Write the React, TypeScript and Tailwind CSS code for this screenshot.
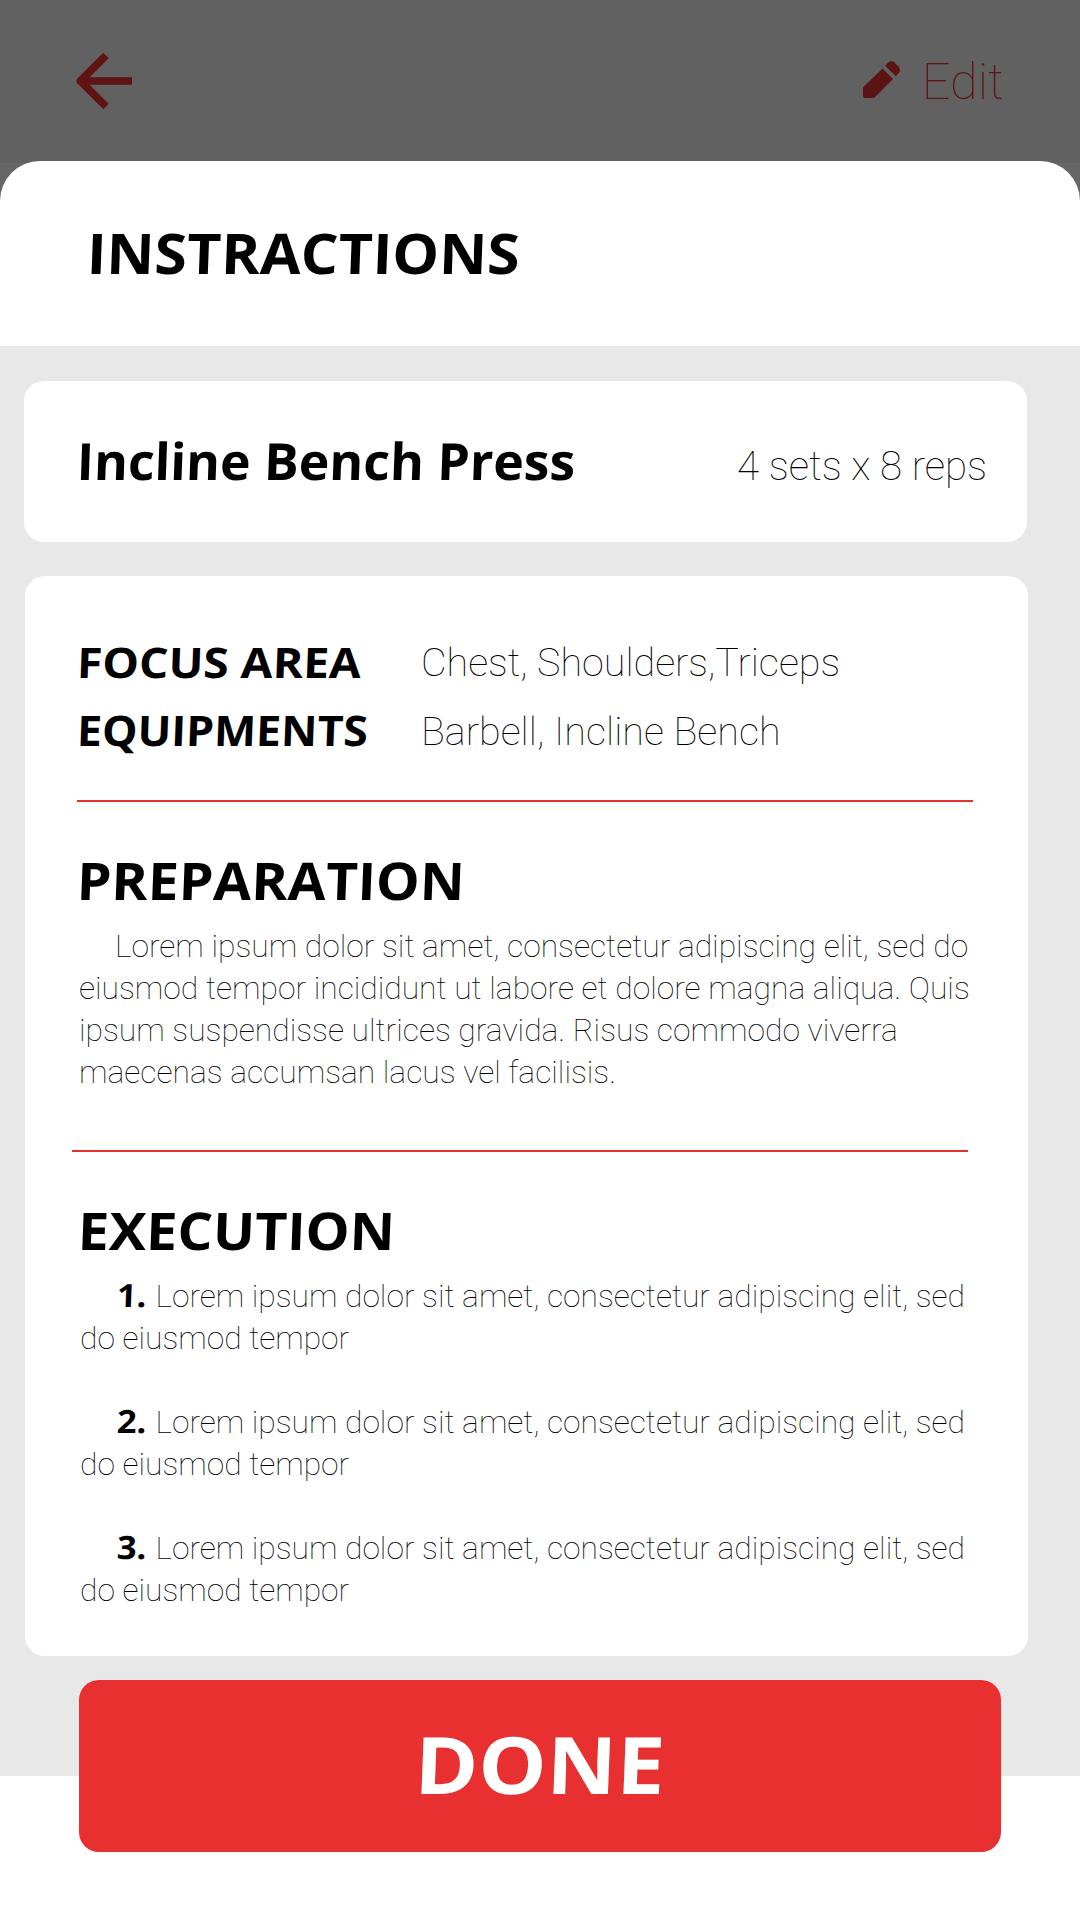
import type { ReactNode } from "react";

const steps = [1, 2, 3];

function Display({ className, children }: { className: string; children: ReactNode }) {
  return (
    <span className={`inline-block whitespace-nowrap font-['Open_Sans',sans-serif] font-bold ${className}`}>
      {children}
    </span>
  );
}

function BackArrow() {
  return (
    <svg width="56" height="58" viewBox="0 0 56 58" fill="none" stroke="#601313" strokeWidth="7.7">
      <path d="M6 29H56" />
      <path d="M30 3.5L4.4 29L30 54.5" strokeLinejoin="round" />
    </svg>
  );
}

function Pencil() {
  return (
    <svg width="37" height="37" viewBox="0 0 37 37" fill="#5c1313">
      <path d="M19.6 7.4L30 18L11.8 36.2Q11 37 10 37H2Q0 37 0 35V27.2Q0 26.3 .8 25.5Z" />
      <path d="M22.2 4.8L25.3 1.6Q28.2 -1.4 31.3 1.3L35.4 5.5Q38.4 8.8 35.8 12L32.8 15.3Z" />
    </svg>
  );
}

export default function App() {
  return (
    <div className="flex h-[1920px] w-[1080px] flex-col overflow-hidden bg-[#666666] font-['Roboto',sans-serif] font-thin text-black">
      <header className="flex h-[163px] shrink-0 items-start justify-between bg-[#616161] px-[76px]">
        <button className="mt-[52px]" aria-label="Back">
          <BackArrow />
        </button>
        <button className="mt-[61px] flex items-start gap-[22px] text-[#601313]">
          <Pencil />
          <span className="-mt-[9px] text-[50.4px] leading-[60px]">Edit</span>
        </button>
      </header>

      <main className="-mt-[2.5px] flex grow flex-col rounded-t-[40px] bg-white">
        <h1 className="h-[185.5px] shrink-0 pl-[87px] text-[56px] leading-[183px]">
          <Display className="origin-left -skew-x-2 scale-x-[1.054]">INSTRACTIONS</Display>
        </h1>

        <div className="flex h-[1430px] shrink-0 flex-col bg-[#e8e8e8] pt-[35.3px]">
          <section className="ml-[24px] flex h-[160.7px] w-[1003px] items-baseline justify-between rounded-[20px] bg-white pl-[53px] pr-[40px]">
            <h2 className="text-[51px] leading-[159px]">
              <Display className="origin-left -skew-x-2 scale-x-[1.014]">Incline Bench Press</Display>
            </h2>
            <p className="text-[40.2px] leading-none">4 sets x 8 reps</p>
          </section>

          <section className="ml-[25px] mt-[34px] h-[1080px] w-[1003px] rounded-[20px] bg-white px-[53px] pt-[51.7px]">
            <div className="flex h-[172.3px]">
              <div className="flex w-[343px] flex-col items-start text-[42px] leading-[68px]">
                <Display className="-ml-[1.5px] origin-left -skew-x-2 scale-x-[1.1]">FOCUS AREA</Display>
                <Display className="-ml-[1.5px] origin-left -skew-x-2 scale-x-[1.063]">EQUIPMENTS</Display>
              </div>
              <div className="flex flex-col text-[39.5px] leading-[69.3px]">
                <p>Chest, Shoulders,Triceps</p>
                <p className="tracking-[0.04px]">Barbell, Incline Bench</p>
              </div>
            </div>
            <hr className="-ml-px h-[2px] w-[896px] border-0 bg-[#e83030]" />

            <h3 className="mt-[47.8px] h-[60px] text-[52px] leading-[60px]">
              <Display className="-ml-[1.5px] origin-left -skew-x-2 scale-x-[1.06]">PREPARATION</Display>
            </h3>
            <p className="ml-px mt-[15px] w-[900px] indent-[36px] text-[31.82px] leading-[42px]">
              Lorem ipsum dolor sit amet, consectetur adipiscing elit, sed do
              <br />
              eiusmod tempor incididunt ut labore et dolore magna aliqua. Quis
              <br />
              ipsum suspendisse ultrices gravida. Risus commodo viverra
              <br />
              maecenas accumsan lacus vel facilisis.
            </p>
            <hr className="-ml-[6px] mt-[57.2px] h-[2px] w-[896px] border-0 bg-[#e83030]" />

            <h3 className="mt-[47.8px] h-[60px] text-[52px] leading-[60px]">
              <Display className="-ml-[0.5px] origin-left -skew-x-2 scale-x-[1.07]">EXECUTION</Display>
            </h3>
            <ol className="ml-[2px] mt-[16px] flex w-[900px] flex-col gap-[42px] text-[31.78px] leading-[42px]">
              {steps.map((n) => (
                <li key={n}>
                  <Display className="ml-[37px] w-[38.5px] origin-left -skew-x-2 scale-x-[1.08] text-[32px] leading-none">
                    {n}.
                  </Display>
                  Lorem ipsum dolor sit amet, consectetur adipiscing elit, sed
                  <br />
                  do eiusmod tempor
                </li>
              ))}
            </ol>
          </section>
        </div>

        <button className="-mt-[96.5px] ml-[79px] h-[172.5px] w-[922px] shrink-0 rounded-[20px] bg-[#e83030] text-center text-[79px] leading-[168px] text-white">
          <Display className="origin-center -skew-x-2 scale-x-[1.088]">DONE</Display>
        </button>
      </main>
    </div>
  );
}
